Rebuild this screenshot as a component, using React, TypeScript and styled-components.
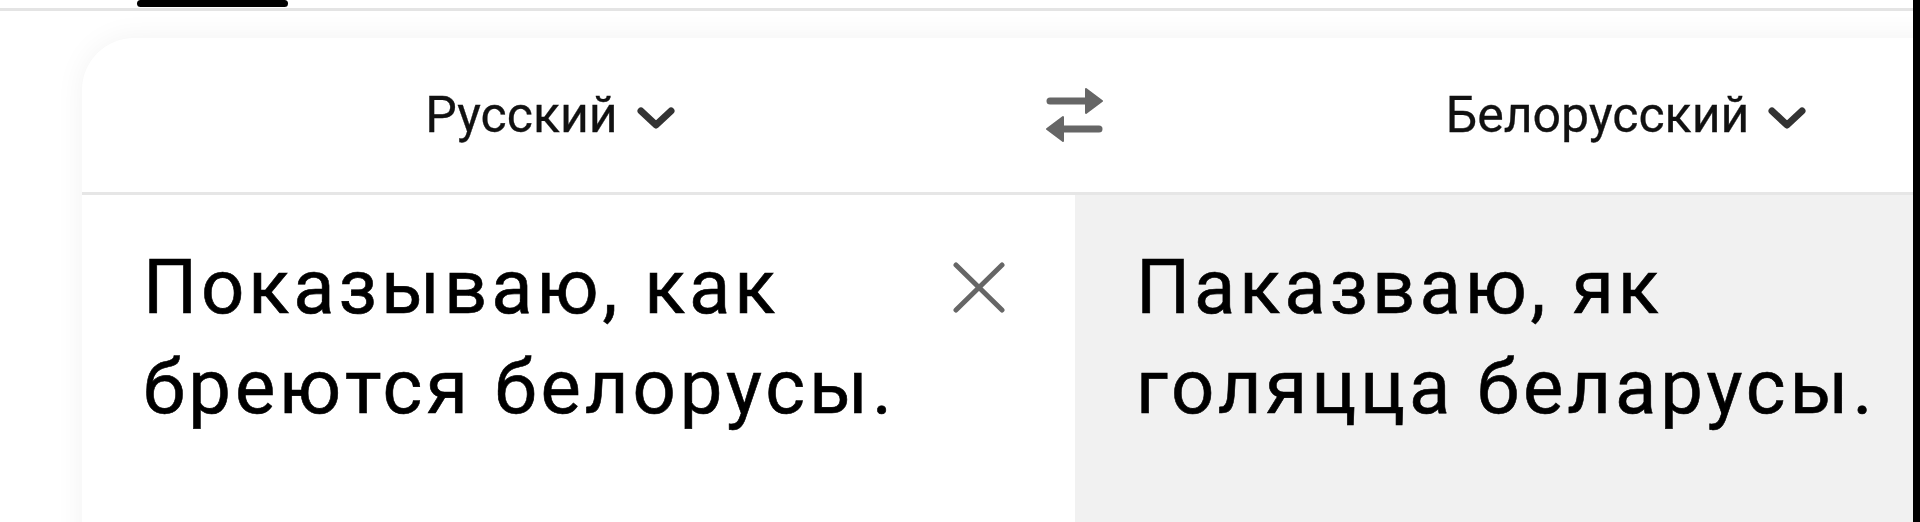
import React from 'react';
import styled, { createGlobalStyle } from 'styled-components';

const GlobalStyle = createGlobalStyle`
  html, body {
    margin: 0;
    padding: 0;
    background: #ffffff;
    overflow: hidden;
  }
  body {
    font-family: Roboto, "Noto Sans", Arial, sans-serif;
    color: #000;
  }
`;

const Screen = styled.div`
  display: flex;
  width: 1920px;
  height: 522px;
  overflow: hidden;
`;

const Viewport = styled.div`
  flex: 1;
  display: flex;
  flex-direction: column;
  overflow: hidden;
  min-width: 0;
`;

const PhoneEdge = styled.div`
  width: 7px;
  flex-shrink: 0;
  background: #000;
`;

const TabStrip = styled.div`
  height: 8px;
  display: flex;
  align-items: flex-start;
  padding-left: 137px;
  border-bottom: 3px solid #e4e4e4;
`;

const TabIndicator = styled.div`
  width: 151px;
  height: 7px;
  background: #000;
  border-radius: 4px;
`;

const Page = styled.div`
  flex: 1;
  padding: 27px 0 0 82px;
  overflow: hidden;
`;

const Card = styled.div`
  width: 2039px;
  height: 600px;
  background: #fff;
  border-radius: 52px 52px 0 0;
  box-shadow: 0 0 30px rgba(0, 0, 0, 0.055);
  display: flex;
  flex-direction: column;
  overflow: hidden;
`;

const Header = styled.div`
  height: 154px;
  display: grid;
  grid-template-columns: 936px 57px 1fr;
  column-gap: 28px;
  align-items: center;
  border-bottom: 3px solid #e6e6e6;
`;

const LangButton = styled.div`
  display: flex;
  align-items: center;
  justify-content: center;
  gap: 19px;
  font-size: 50px;
  color: #111;
  -webkit-text-stroke: 0.3px #111;
`;

const Chevron = styled.svg`
  width: 38px;
  height: 22px;
  margin-top: 6px;
`;

const SwapIcon = styled.svg`
  width: 57px;
  height: 55px;
  display: block;
`;

const Body = styled.div`
  flex: 1;
  display: grid;
  grid-template-columns: 993px 1fr;
`;

const Pane = styled.div<{ $tinted?: boolean }>`
  display: flex;
  align-items: flex-start;
  padding: 42px 0 0 61px;
  background: ${(p) => (p.$tinted ? '#f1f1f1' : '#fff')};
`;

const PaneText = styled.div<{ $width: number }>`
  width: ${(p) => p.$width}px;
  font-size: 76px;
  letter-spacing: 3.9px;
  line-height: 100px;
  color: #000;
  -webkit-text-stroke: 0.6px #000;
`;

const ClearIcon = styled.svg`
  width: 52px;
  height: 51px;
  margin: 25px 0 0 30px;
  flex-shrink: 0;
`;

const ChevronDown = () => (
  <Chevron viewBox="0 0 38 22">
    <polyline
      points="4,4 19,18 34,4"
      fill="none"
      stroke="#333"
      strokeWidth="7"
      strokeLinecap="round"
      strokeLinejoin="round"
    />
  </Chevron>
);

export default function App() {
  return (
    <>
      <GlobalStyle />
      <Screen>
        <Viewport>
          <TabStrip>
            <TabIndicator />
          </TabStrip>
          <Page>
            <Card>
              <Header>
                <LangButton>
                  <span>Русский</span>
                  <ChevronDown />
                </LangButton>
                <SwapIcon viewBox="0 0 57 55">
                  <g fill="#666" stroke="#666" strokeLinejoin="round">
                    <line x1="4" y1="13" x2="42" y2="13" strokeWidth="7" strokeLinecap="round" />
                    <polygon points="40,1 56,13 40,25" strokeWidth="2" />
                    <polygon points="1,41 17,29 17,53" strokeWidth="2" />
                    <line x1="15" y1="41" x2="53" y2="41" strokeWidth="7" strokeLinecap="round" />
                  </g>
                </SwapIcon>
                <LangButton>
                  <span>Белорусский</span>
                  <ChevronDown />
                </LangButton>
              </Header>
              <Body>
                <Pane>
                  <PaneText $width={780}>Показываю, как бреются белорусы.</PaneText>
                  <ClearIcon viewBox="0 0 52 51">
                    <g stroke="#666" strokeWidth="5" strokeLinecap="round">
                      <line x1="3" y1="3" x2="49" y2="48" />
                      <line x1="49" y1="3" x2="3" y2="48" />
                    </g>
                  </ClearIcon>
                </Pane>
                <Pane $tinted>
                  <PaneText $width={800}>Паказваю, як голяцца беларусы.</PaneText>
                </Pane>
              </Body>
            </Card>
          </Page>
        </Viewport>
        <PhoneEdge />
      </Screen>
    </>
  );
}
